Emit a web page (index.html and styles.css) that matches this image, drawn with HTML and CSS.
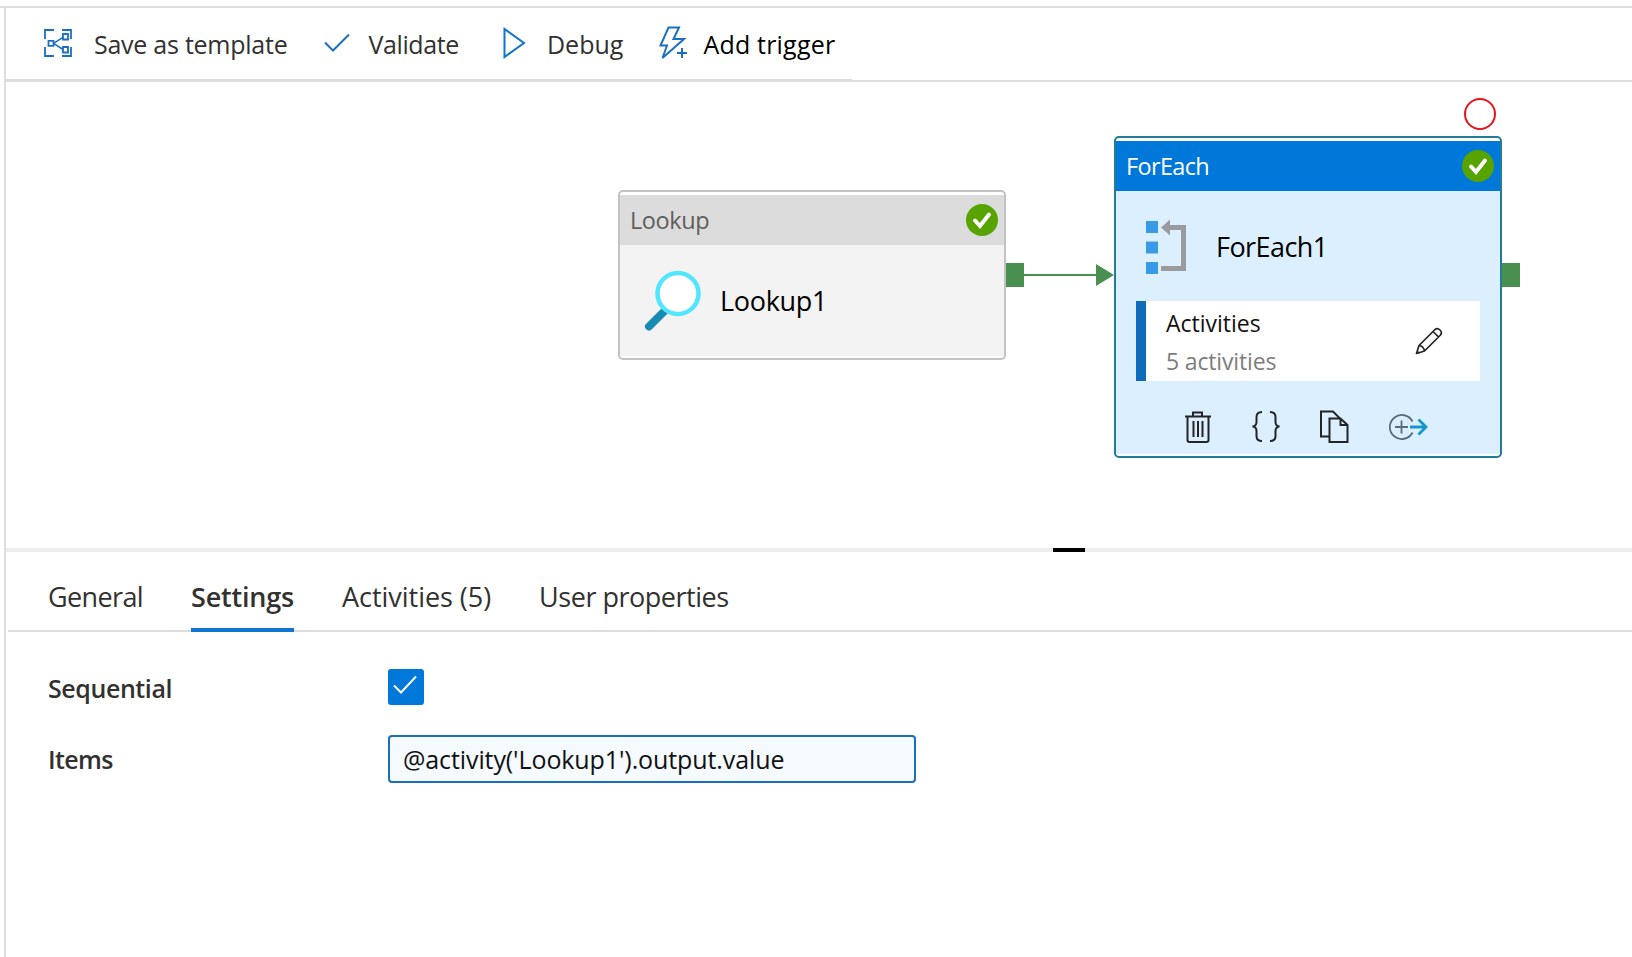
FILE: index.html
```
<!DOCTYPE html>
<html lang="en">
<head>
<meta charset="utf-8">
<title>Pipeline editor</title>
<link rel="stylesheet" href="styles.css">
</head>
<body>
<div class="app">
  <header class="toolbar">
    <button class="tool tool-save">
      <svg width="28" height="28" viewBox="0 0 28 28" fill="none" stroke="#1b6fc2" stroke-width="1.8"><path d="M1 10V1h9M18 1h9v9M27 18v9h-9M10 27H1v-9"/><path d="M4.5 11.800h5v5h-5zM19 5h5v5.500h-5zM19 18h5v5.500h-5z"/><path d="M9.500 14.300 19 8.300M9.500 14.300 19 20.500" stroke-width="1.500"/></svg>
      <span class="t save">Save as template</span>
    </button>
    <button class="tool tool-validate">
      <svg width="26" height="20" viewBox="0 0 26 20" fill="none" stroke="#1b6fc2" stroke-width="2"><path d="M1 9.500 9 17.500 25 1.500"/></svg>
      <span class="t validate">Validate</span>
    </button>
    <button class="tool tool-debug">
      <svg width="23" height="32" viewBox="0 0 23 32" fill="none" stroke="#0f74cf" stroke-width="2"><path d="M1.500 2v28L21 16z"/></svg>
      <span class="t debug">Debug</span>
    </button>
    <button class="tool tool-trigger">
      <svg width="29" height="34" viewBox="0 0 29 34" fill="none" stroke="#1b6fc2" stroke-width="2"><path d="M9.500 1.500H20L14.500 13H25L3.500 32 8 19.500H1.500z"/><path d="M23 22v10M18 27h10"/></svg>
      <span class="t trigger">Add trigger</span>
    </button>
  </header>

  <main class="canvas">
    <svg class="wires" width="1626" height="466" viewBox="6 82 1626 466">
      <path d="M1006 263h18v24h-18zM1502 263h18v24h-18zM1096 264l18 11-18 11z" fill="#498f50"/>
      <path d="M1024 275h72" stroke="#498f50" stroke-width="2"/>
      <circle cx="1480" cy="114" r="15" fill="none" stroke="#e8141b" stroke-width="2"/>
    </svg>

    <section class="node lookup">
      <div class="node-head"><span class="t lookup-head">Lookup</span>
        <svg width="32" height="32" viewBox="0 0 32 32"><circle cx="16" cy="16" r="16" fill="#57a300"/><path d="M9 16.500 14 22 23 10.500" fill="none" stroke="#fff" stroke-width="4" stroke-linecap="round"/></svg>
      </div>
      <div class="node-body">
        <svg width="58" height="62" viewBox="0 0 58 62"><path d="M5 56.500 20.500 41" stroke="#198ab3" stroke-width="8" stroke-linecap="round"/><circle cx="34" cy="23.500" r="20.500" fill="#fff" stroke="#50e6ff" stroke-width="4.500"/></svg>
        <span class="t lookup-name">Lookup1</span>
      </div>
    </section>

    <section class="node foreach">
      <div class="node-head"><span class="t foreach-head">ForEach</span>
        <svg width="32" height="32" viewBox="0 0 32 32"><circle cx="16" cy="16" r="16" fill="#57a300"/><path d="M9 16.500 14 22 23 10.500" fill="none" stroke="#fff" stroke-width="4" stroke-linecap="round"/></svg>
      </div>
      <div class="node-body">
        <svg width="42" height="56" viewBox="0 0 42 56"><path d="M1 2h12v12H1zM1 22.500h12v12H1zM1 43h12v12H1z" fill="#379be8"/><path d="M24 8.500h14.500v41H16" fill="none" stroke="#999b9d" stroke-width="5"/><path d="M16 8.500 25 .5v16z" fill="#999b9d"/></svg>
        <span class="t foreach-name">ForEach1</span>
      </div>
      <div class="inner">
        <div class="inner-text"><span class="t act">Activities</span><span class="t act-count">5 activities</span></div>
        <svg width="28" height="28" viewBox="0 0 28 28" fill="none" stroke="#242424" stroke-width="1.700" stroke-linejoin="round"><path d="M1.500 26.500 4 18.500 20 2.500Q22.500 .5 25 3T25.500 8L9.500 24zM4 18.500Q8.500 19 9.500 24M18 4.500 23.500 10M2 25l3 1"/></svg>
      </div>
      <div class="actions">
        <svg width="28" height="34" viewBox="0 0 28 34" fill="none" stroke="#242424" stroke-width="2"><path d="M1 6.500h26M9 6V2.500h9V6M3.500 6.500V30q0 2 2 2h17q2 0 2-2V6.500M9.500 11v16M14 11v16M18.500 11v16"/></svg>
        <svg width="30" height="34" viewBox="0 0 30 34" fill="none" stroke="#242424" stroke-width="2"><path d="M11 2Q5.500 2 5.500 7v5q0 4-4 4.500 4 .5 4 4.500v5q0 5 5.500 5M19 2q5.500 0 5.500 5v5q0 4 4 4.500-4 .5-4 4.500v5q0 5-5.500 5"/></svg>
        <svg width="30" height="34" viewBox="0 0 30 34" fill="none" stroke="#242424" stroke-width="2"><path d="M9.500 26.500H2v-25h12L21 8.500M10.500 8.500h11L28.500 15v17h-18zM21.500 8.500V15h7"/></svg>
        <svg width="40" height="28" viewBox="0 0 40 28" fill="none"><path d="M24.500 8.500A12 12 0 1 0 24.500 19.500M13.500 7.500v13M7 14h13" stroke="#596b80" stroke-width="1.800"/><path d="M22 14h15M30.500 6.500 38 14l-7.500 7.500" stroke="#1197cb" stroke-width="2.800"/></svg>
      </div>
    </section>
  </main>

  <div class="splitter"><div class="grip"></div></div>

  <nav class="tabs">
    <a class="tab"><span class="t general">General</span></a>
    <a class="tab active"><span class="t settings">Settings</span></a>
    <a class="tab"><span class="t activities">Activities (5)</span></a>
    <a class="tab"><span class="t user">User properties</span></a>
  </nav>

  <div class="form">
    <div class="row row-check"><label class="label"><span class="t seq">Sequential</span></label>
      <span class="checkbox"><svg width="24" height="20" viewBox="0 0 24 20" fill="none" stroke="#fff" stroke-width="2"><path d="M1 10.500 8 17.500 23 1.500"/></svg></span>
    </div>
    <div class="row row-items"><label class="label"><span class="t items">Items</span></label>
      <div class="field"><span class="t value">@activity('Lookup1').output.value</span></div>
    </div>
  </div>
</div>
</body>
</html>
```
FILE: styles.css
```
* { box-sizing: border-box; }
html, body { height: 957px; overflow: hidden; }
body { display: flow-root; margin: 0; background: #fff; font-family: "Open Sans", "Noto Sans", sans-serif; color: #323130; }
svg { display: block; flex: none; }
.t { white-space: nowrap; }

.app { height: 951px; margin-top: 6px; border-top: 2px solid #ddd; padding-left: 4px; overflow: hidden; display: flex; flex-direction: column; }

.toolbar { position: relative; display: flex; align-items: center; flex: none; height: 74px; border-left: 2px solid #ddd; border-bottom: 2px solid #ddd; }
.toolbar::after { content: ""; position: absolute; left: 0; bottom: 0; width: 846px; height: 1px; background: #ddd; }
.tool { display: flex; align-items: center; padding: 0; border: 0; background: none; font: 25px/34px "Open Sans", sans-serif; color: #323130; }
.tool .t { padding-bottom: 1px; }
.tool svg { margin-top: -2px; }
.tool-save { margin-left: 38px; gap: 22px; }
.tool-validate { margin-left: 37px; gap: 18px; }
.tool-debug { margin-left: 44px; gap: 21px; }
.tool-trigger { margin-left: 36px; gap: 15px; color: #000; }
.save { letter-spacing: -.25px; }
.validate { letter-spacing: -.38px; }
.trigger { letter-spacing: .2px; }

.canvas { position: relative; flex: none; height: 466px; border-left: 2px solid #ddd; }
.wires { position: absolute; left: 0; top: 0; }
.node { position: absolute; width: 388px; border: 2px solid #c2c2c2; border-radius: 5px; padding: 3px 0 2px; background: #fff; }
.node-head { display: flex; align-items: center; justify-content: space-between; height: 50px; padding: 0 6px 0 10px; font-size: 23.5px; line-height: 32px; }
.node-body { display: flex; align-items: center; font-size: 27px; line-height: 36px; color: #000; }
.lookup { left: 612px; top: 108px; height: 170px; }
.lookup .node-head { background: #dcdcdc; color: #605e5c; }
.lookup .node-body { height: 111px; background: #f3f3f3; padding-left: 24px; gap: 18px; }
.lookup-head { letter-spacing: -.4px; }
.lookup-name { letter-spacing: -.3px; }

.foreach { left: 1108px; top: 54px; height: 322px; border-color: #227b98; }
.foreach .node-head { background: #0078d9; color: #fff; }
.foreach .node-body { height: 110px; padding: 2px 0 0 29px; gap: 29px; background: #dceffe; }
.foreach-head { letter-spacing: -.65px; }
.foreach-name { letter-spacing: -.55px; }
.inner { display: flex; justify-content: space-between; align-items: center; height: 80px; margin: 0 20px; padding: 0 37px 0 20px; background: #fff; border-left: 10px solid #0f6cbd; box-shadow: -20px 0 #dceffe, 20px 0 #dceffe; }
.inner-text { display: flex; flex-direction: column; font-size: 23px; line-height: 38px; color: #111; padding-top: 2px; }
.act-count { color: #7d7d7d; letter-spacing: -.15px; }
.actions { display: flex; align-items: center; height: 73px; padding: 18px 0 0 68px; background: #dceffe; }
.actions svg + svg { margin-left: 38.5px; }

.splitter { flex: none; height: 4px; border-left: 2px solid #ddd; background: #ededed; padding-left: 1047px; }
.grip { width: 32px; height: 4px; background: #000; }

.tabs { position: relative; flex: none; display: flex; gap: 48px; height: 80px; padding-left: 40px; margin-left: 4px; border-bottom: 2px solid #ddd; font-size: 27px; line-height: 36px; }
.tabs::before { content: ""; position: absolute; left: -4px; top: 0; width: 2px; height: 80px; background: #ddd; }
.tab { height: 80px; padding-top: 27px; }
.tab.active { font-weight: 600; border-bottom: 4px solid #0f74cf; }
.general { letter-spacing: -.62px; }
.settings { letter-spacing: -.19px; }
.activities { letter-spacing: -.04px; }
.user { letter-spacing: -.48px; }

.form { flex: 1; padding-left: 42px; border-left: 2px solid #ddd; }
.row { display: flex; align-items: center; }
.label { width: 340px; font-size: 25px; line-height: 34px; font-weight: 600; padding-top: 2px; }
.row-check { margin-top: 37px; height: 36px; }
.checkbox { width: 36px; height: 36px; border-radius: 3px; background: #0078d9; padding: 6px 5px; }
.row-items { margin-top: 30px; height: 48px; }
.row-items .label { padding-top: 0; }
.field { width: 528px; height: 48px; border: 2px solid #1a6fbd; border-radius: 4px; background: #f5faff; padding: 5px 13px; font-size: 25px; line-height: 34px; color: #111; }
.seq { letter-spacing: -.42px; }
.items { letter-spacing: -.6px; }
.value { letter-spacing: -.1px; }
```
